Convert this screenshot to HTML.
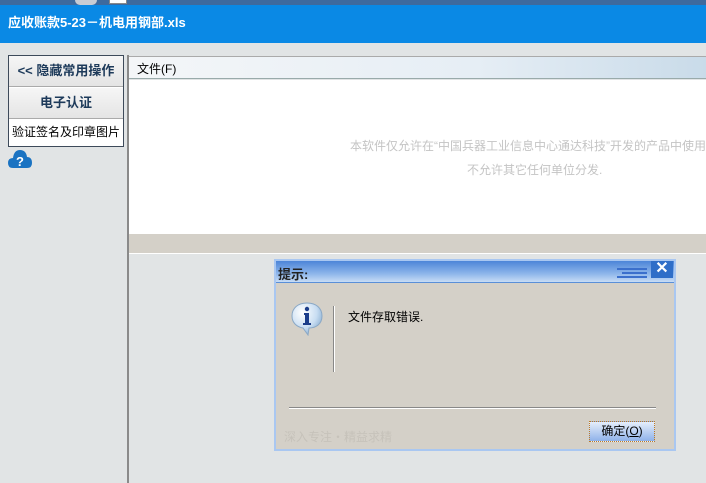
<!DOCTYPE html>
<html><head><meta charset="utf-8"><style>
*{margin:0;padding:0;box-sizing:border-box}
body{width:706px;height:483px;overflow:hidden;background:#e1e4e5;font-family:"Liberation Sans","WenQuanYi Zen Hei","Noto Sans CJK SC",sans-serif;font-size:12px;position:relative}
.a{position:absolute}
</style></head><body>
<div class="a" style="left:0;top:0;width:706px;height:5px;background:#3e6a9e"></div>
<div class="a" style="left:75px;top:0;width:22px;height:5px;background:#c9ccd4;border-radius:0 0 10px 10px"></div>
<div class="a" style="left:109px;top:0;width:18px;height:4px;background:#fff;border:1px solid #888;border-top:none"></div>
<div class="a" style="left:0;top:5px;width:706px;height:38px;background:#0a89e5"></div>
<div class="a" style="left:8px;top:12px;color:#fff;font-weight:bold;font-size:13px">应收账款5-23－机电用钢部.xls</div>

<div class="a" style="left:8px;top:55px;width:116px;height:92px;border:1px solid #3d4a5a;background:#fff"></div>
<div class="a" style="left:9px;top:56px;width:114px;height:31px;background:linear-gradient(#f6f6f6,#e4e4e4);border-bottom:1px solid #aaa;color:#1d3a5a;font-weight:bold;font-size:13px;line-height:30px;text-align:center">&lt;&lt; 隐藏常用操作</div>
<div class="a" style="left:9px;top:88px;width:114px;height:31px;background:linear-gradient(#f6f6f6,#e4e4e4);border-bottom:1px solid #aaa;color:#1d3a5a;font-weight:bold;font-size:13px;line-height:30px;text-align:center">电子认证</div>
<div class="a" style="left:9px;top:120px;width:114px;height:26px;color:#000;font-size:12px;line-height:24px;text-align:center">验证签名及印章图片</div>
<svg class="a" style="left:8px;top:149px" width="24" height="20" viewBox="0 0 24 20"><path d="M5 19 Q0 19 0 14 Q0 9 5 9 Q6 1 12 1 Q18 1 19 8 Q24 8 24 14 Q24 19 19 19Z" fill="#1a73c2"/><text x="12" y="17" fill="#fff" font-size="13" font-weight="bold" text-anchor="middle" font-family="Liberation Sans">?</text></svg>

<div class="a" style="left:127px;top:55px;width:2px;height:428px;background:#8a8a8a"></div>
<div class="a" style="left:129px;top:56px;width:577px;height:23px;background:linear-gradient(90deg,#f4f6f8,#e6eef5 60%,#c9dbe9);border-bottom:1px solid #9aa;border-top:1px solid #aaa"></div>
<div class="a" style="left:137px;top:60px;font-size:12px;color:#000">文件(F)</div>
<div class="a" style="left:129px;top:80px;width:577px;height:154px;background:#fff"></div>
<div class="a" style="left:350px;top:137px;color:#c4c4c4;font-size:12px;white-space:nowrap">本软件仅允许在“中国兵器工业信息中心通达科技”开发的产品中使用</div>
<div class="a" style="left:467px;top:161px;color:#c4c4c4;font-size:12px;white-space:nowrap">不允许其它任何单位分发.</div>
<div class="a" style="left:129px;top:234px;width:577px;height:20px;background:#d4d0c8;border-bottom:1px solid #fff"></div>

<div class="a" style="left:274px;top:259px;width:402px;height:192px;background:#d4d0c8;border:2px solid #a9c7f1"></div>
<div class="a" style="left:276px;top:261px;width:398px;height:22px;background:linear-gradient(#4c85d8,#8db5ea 60%,#c8dcf5);border-bottom:1px solid #5a8fd8"></div>
<div class="a" style="left:278px;top:264px;font-weight:bold;font-size:13px;color:#222">提示:</div>
<div class="a" style="left:617px;top:268px;width:30px;height:2px;background:#3b6fcc"></div>
<div class="a" style="left:622px;top:272px;width:25px;height:2px;background:#3b6fcc"></div>
<div class="a" style="left:617px;top:276px;width:30px;height:2px;background:#3b6fcc"></div>
<div class="a" style="left:651px;top:261px;width:22px;height:17px;background:#2f6ec8;color:#fff;font-weight:bold;font-size:16px;line-height:16px;text-align:center">✕</div>
<svg class="a" style="left:291px;top:302px" width="34" height="34" viewBox="0 0 34 34"><defs><radialGradient id="g" cx="0.35" cy="0.3" r="0.8"><stop offset="0" stop-color="#fff"/><stop offset="0.6" stop-color="#c8ddf2"/><stop offset="1" stop-color="#7ea6cc"/></radialGradient></defs><path d="M16 1 C25 1 31 6 31 14 C31 22 25 26 18 26 L17 33 L12 26 C6 25 1 21 1 14 C1 6 7 1 16 1Z" fill="url(#g)" stroke="#8aa8c6"/><circle cx="16" cy="7" r="2.2" fill="#1b3d8a"/><path d="M13 11 L18 11 L18 21 L20 21 L20 23 L12 23 L12 21 L14 21 L14 13 L13 13Z" fill="#1b3d8a"/></svg>
<div class="a" style="left:333px;top:306px;width:2px;height:66px;background:#fff;border-left:1px solid #888"></div>
<div class="a" style="left:348px;top:308px;font-size:12px;color:#000">文件存取错误.</div>
<div class="a" style="left:289px;top:407px;width:367px;height:2px;background:#888;border-bottom:1px solid #fff"></div>
<div class="a" style="left:284px;top:428px;color:#c6c2ba;font-size:12px">深入专注・精益求精</div>
<div class="a" style="left:589px;top:421px;width:66px;height:21px;border:1px dotted #c07a20;background:linear-gradient(#e6eefa,#8fb2ea);font-size:12px;line-height:19px;text-align:center;color:#000">确定(<u>O</u>)</div>
</body></html>
